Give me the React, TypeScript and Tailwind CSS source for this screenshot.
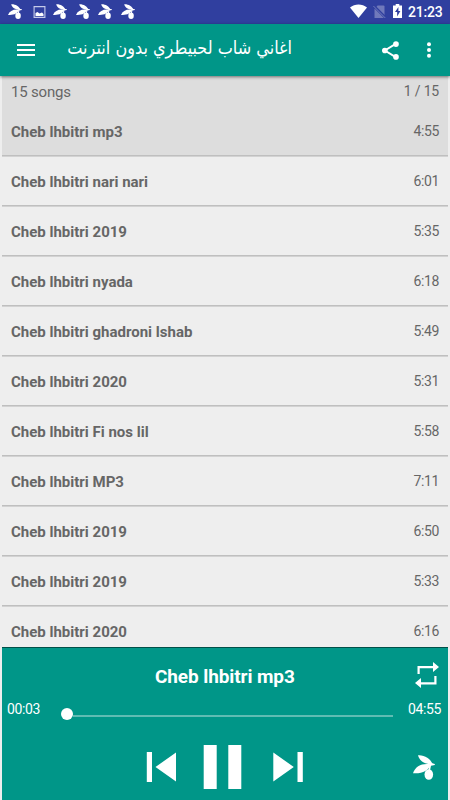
import React from "react";

const songs: [string, string][] = [
  ["Cheb lhbitri mp3", "4:55"],
  ["Cheb lhbitri nari nari", "6:01"],
  ["Cheb lhbitri 2019", "5:35"],
  ["Cheb lhbitri nyada", "6:18"],
  ["Cheb lhbitri ghadroni lshab", "5:49"],
  ["Cheb lhbitri 2020", "5:31"],
  ["Cheb lhbitri Fi nos lil", "5:58"],
  ["Cheb lhbitri MP3", "7:11"],
  ["Cheb lhbitri 2019", "6:50"],
  ["Cheb lhbitri 2019", "5:33"],
  ["Cheb lhbitri 2020", "6:16"],
];

function Olive({ className }: { className: string }) {
  return (
    <svg viewBox="0 0 22 25" className={className} fill="currentColor" preserveAspectRatio="none">
      <path d="M5 .3C11 -.3 17.500 3.500 19.500 9C12.500 9.800 6.500 6.500 5 .3Z" />
      <path d="M0 18.200C2.500 11 9 8 17.500 9.300C16 15.800 8.500 19 0 18.200Z" />
      <path d="M16 7.300L21.800 8.900V10L18 10.800L17.100 15H15.500L16.300 10Z" />
      <ellipse cx="15.800" cy="19.500" rx="4.300" ry="5.300" />
    </svg>
  );
}

function StatusBar() {
  return (
    <div className="flex h-6 shrink-0 items-start bg-[#303f9f]">
      <Olive className="ml-2 mt-[4px] h-[15px] w-[14px]" />
      <svg viewBox="0 0 12 12" className="ml-[11px] mt-[6px] h-3 w-[13px] text-[#c5cae9]" fill="none">
        <path d="M.6.600H11.400V11.400H.600Z" stroke="currentColor" strokeWidth="1.100" />
        <path d="M2 10V7L4 6L6 7.500L8.500 6.500L10 8V10Z" fill="#fff" />
      </svg>
      <Olive className="ml-[7px] mt-[4px] h-[15px] w-[14px]" />
      <Olive className="ml-[9px] mt-[4px] h-[15px] w-[14px]" />
      <Olive className="ml-[8px] mt-[4px] h-[15px] w-[14px]" />
      <Olive className="ml-[9px] mt-[4px] h-[15px] w-[14px]" />
      <svg viewBox="0 0 17 14" className="ml-auto mr-[6px] mt-[4px] h-[14px] w-[17px]" fill="#fff">
        <path d="M0 3.500C4.800-.600 12.200-.600 17 3.500L8.500 14Z" />
      </svg>
      <svg viewBox="0 0 13 14" className="mr-[7px] mt-[5px] h-[14px] w-[13px]" fill="#7079bb">
        <path d="M4.600.500H10.500Q11.500.500 11.500 1.500V13H1.500V4Z" />
        <path d="M.400 .500L12.800 13" stroke="#303f9f" strokeWidth="2.600" />
        <path d="M.400 1L12.300 13" stroke="#7079bb" strokeWidth="1" />
      </svg>
      <svg viewBox="0 0 10 14" className="mr-[6px] mt-[4px] h-[14px] w-[9px]" preserveAspectRatio="none">
        <path d="M3 0H7V1.500H10V14H0V1.500H3Z" fill="#fff" />
        <path d="M6 3L2.200 8H4.600V12.500L8.200 7H6Z" fill="#303f9f" />
      </svg>
      <span className="mr-2 mt-[4px] w-[34px] whitespace-nowrap text-[14px] font-medium leading-4 tracking-[-0.2px]">21:23</span>
    </div>
  );
}

function AppBar() {
  return (
    <header className="z-10 flex h-[52px] shrink-0 items-center bg-[#009688] shadow-[0_1px_3px_rgba(0,0,0,0.5)]">
      <svg viewBox="0 0 18 14" className="-mt-px ml-[17px] h-[14px] w-[18px]" fill="#fff">
        <path d="M0 1H18V3H0ZM0 6H18V8H0ZM0 11H18V13H0Z" />
      </svg>
      <h1 dir="rtl" className="mb-1 ml-[33px] w-[224px] origin-right scale-x-[1.005] scale-y-[1.15] whitespace-nowrap font-['DejaVu_Sans','Noto_Sans',sans-serif] text-[16px] leading-7">
        اغاني شاب لحبيطري بدون انترنت
      </h1>
      <svg viewBox="0 0 18 20" className="ml-auto mr-[28px] h-[19px] w-[17px]" fill="#fff">
        <path d="M14.500 3L3 10L14.500 17" fill="none" stroke="#fff" strokeWidth="2" />
        <circle cx="14.800" cy="3.200" r="3" />
        <circle cx="3" cy="10" r="3" />
        <circle cx="14.800" cy="16.800" r="3" />
      </svg>
      <svg viewBox="0 0 4 16" className="mr-[19px] h-4 w-1" fill="#fff">
        <circle cx="2" cy="2.200" r="2" />
        <circle cx="2" cy="8" r="2" />
        <circle cx="2" cy="13.800" r="2" />
      </svg>
    </header>
  );
}

function Player() {
  return (
    <section className="mx-[2px] flex h-[153px] shrink-0 flex-col border-t border-[#005048] bg-[#009688]">
      <div className="flex h-[48px] items-center">
        <h2 className="ml-[153px] w-[152px] whitespace-nowrap pt-[10px] text-[19px] font-bold leading-6 tracking-[-0.1px]">Cheb lhbitri mp3</h2>
        <svg viewBox="0 0 24 26" className="ml-auto mr-[9px] mt-[5px] h-[26px] w-[24px]" fill="#fff">
          <path d="M2.500 12V4H18V0L24 5L18 10V6.200H4.700V12ZM21.500 14V22.500H6V26L0 21L6 16V20.200H19.300V14Z" />
        </svg>
      </div>
      <div className="flex h-[38px] items-start pl-[5px] pr-[7px]">
        <span className="mt-[5px] w-[54px] text-[14px] leading-4 tracking-[-0.35px]">00:03</span>
        <div className="mt-[12px] flex w-[332px] items-center">
          <div className="h-3 w-3 rounded-full bg-white" />
          <div className="mt-[3px] h-[2px] flex-1 bg-[#5fbcb3]" />
        </div>
        <span className="ml-auto mt-[5px] text-[14px] leading-4 tracking-[-0.35px]">04:55</span>
      </div>
      <div className="flex h-[66px] items-start">
        <svg viewBox="0 0 30 30" className="ml-[144px] mt-[18px] h-[30px] w-[30px]" fill="#fff">
          <path d="M.800 0H6V30H.800ZM30 .500V29.500L9.500 15Z" />
        </svg>
        <svg viewBox="0 0 40 44" className="ml-[26px] mt-[11px] h-[44px] w-[40px]" fill="#fff">
          <path d="M1.700 0H14.700V44H1.700ZM26.300 0H39.300V44H26.300Z" />
        </svg>
        <svg viewBox="0 0 30 30" className="ml-[31px] mt-[18px] h-[30px] w-[30px]" fill="#fff">
          <path d="M.300 .500V29.500L20.800 15ZM24.500 0H29.800V30H24.500Z" />
        </svg>
        <Olive className="ml-auto mr-[13px] mt-[21px] h-[25px] w-[22px]" />
      </div>
    </section>
  );
}

export default function App() {
  return (
    <main className="flex h-[800px] w-[450px] flex-col overflow-hidden bg-[#eee] font-['Roboto',sans-serif] text-white">
      <StatusBar />
      <AppBar />
      <div className="mx-[2px] min-h-0 flex-1 overflow-hidden text-[#666]">
        <div className="flex h-[30px] items-start justify-between bg-[#ddd] px-[9px]">
          <span className="mt-[6px] text-[15px] leading-5 tracking-[-0.2px]">15 songs</span>
          <span className="mt-[5px] text-[14px] leading-5 tracking-[-0.2px]">1 / 15</span>
        </div>
        <ul>
          {songs.map(([title, time], i) => (
            <li key={i} className={`flex h-[50px] items-start justify-between border-b border-t border-b-[#bfbfbf] px-[9px] ${i === 0 ? "border-t-[#ddd] bg-[#ddd]" : "border-t-[#d2d2d2] bg-[#eee]"}`}>
              <span className="mt-[15px] text-[15px] font-bold leading-5">{title}</span>
              <span className="mt-[14px] text-[14px] leading-5 tracking-[-0.35px]">{time}</span>
            </li>
          ))}
        </ul>
      </div>
      <Player />
    </main>
  );
}
